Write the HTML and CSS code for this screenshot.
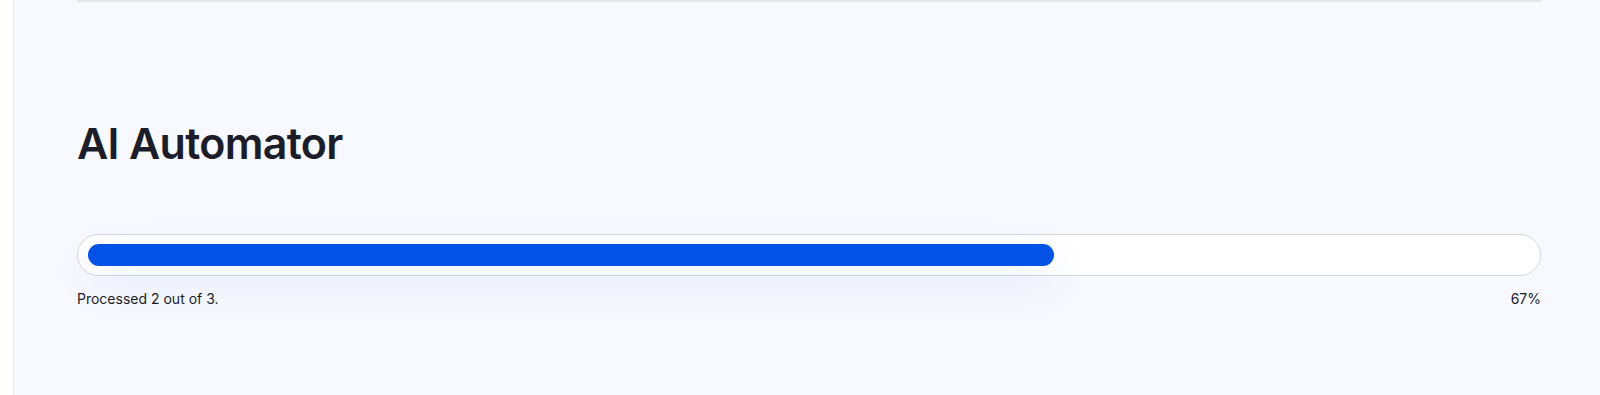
FILE: index.html
```html
<!DOCTYPE html>
<html>
  <head>
    <meta charset="UTF-8" />
    <title>AI Automator</title>
    <link rel="stylesheet" href="styles.css">
  </head>
  <body>
    <div class="layout">
      <div class="sidebar"></div>
      <div class="main">
        <div class="divider"></div>
        <h1 class="title">AI Automator</h1>
        <div class="progress">
          <div class="progress-track">
            <div class="progress-bar" style="width: 67%"></div>
          </div>
          <div class="progress-info">
            <span>Processed 2 out of 3.</span>
            <span>67%</span>
          </div>
        </div>
      </div>
    </div>
  </body>
</html>
```

FILE: styles.css
```css
* {
  box-sizing: border-box;
}

body {
  margin: 0;
  font-family: Inter, "Noto Sans", sans-serif;
  color: #1c1d29;
  background-color: #ffffff;
}

.layout {
  display: flex;
  min-height: 395px;
}

.sidebar {
  width: 14px;
  background-color: #ffffff;
  border-right: 1px solid #eceef2;
}

.main {
  flex: 1;
  background-color: #f8f9fe;
  padding: 0 59px 0 63px;
}

.divider {
  border-top: 2px solid #e3e5ea;
}

.title {
  margin: 116px 0 0 0;
  font-size: 43px;
  font-weight: 600;
  letter-spacing: -0.7px;
  line-height: 1.2;
}

.progress {
  margin-top: 64px;
}

.progress-track {
  height: 42px;
  padding: 9px 10px;
  background-color: #ffffff;
  border: 1px solid #d6d7dc;
  border-radius: 21px;
}

.progress-bar {
  height: 22px;
  background-color: #0452e6;
  border-radius: 11px;
  box-shadow: 0 16px 44px rgba(4, 82, 230, 0.1);
}

.progress-info {
  display: flex;
  justify-content: space-between;
  margin-top: 14px;
  font-size: 14px;
  color: #1c1d29;
}
```
